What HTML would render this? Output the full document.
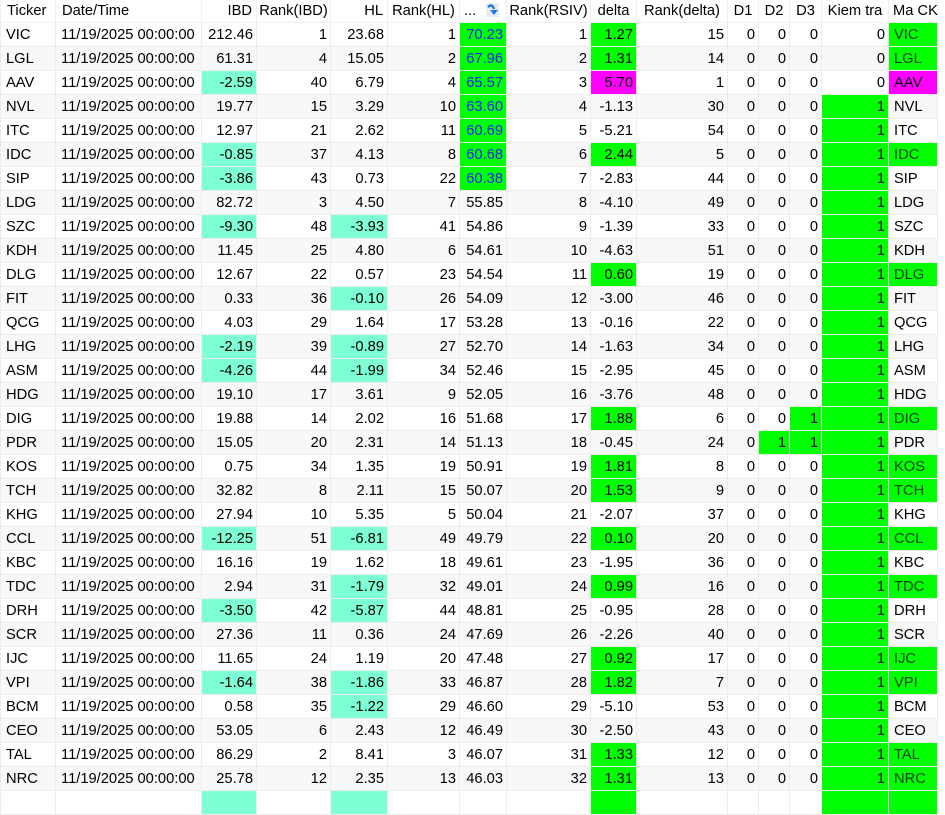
<!DOCTYPE html>
<html><head><meta charset="utf-8"><style>
html,body{margin:0;padding:0;background:#fff;width:945px;height:796px;overflow:hidden}
table{border-collapse:collapse;table-layout:fixed;width:937px;font-family:"Segoe UI","Liberation Sans",sans-serif;font-size:14.7px;color:#000;position:absolute;left:0;top:0}
td,th{border:1px solid #ececec;height:23px;padding:0 3px 0 5px;white-space:nowrap;overflow:hidden;text-align:right;font-weight:normal}
th{height:22px;border-top:none;border-color:#efefef;padding:0 2px}
tr:nth-child(odd) td{background:#f8f8f8}
td:nth-child(1),td:nth-child(2),td:nth-child(15),th:nth-child(1),th:nth-child(2),th:nth-child(15){text-align:left}
th:nth-child(1),th:nth-child(2){padding-left:6px}
th:nth-child(15){padding-left:4px;overflow:visible}
th{text-align:right}
th:nth-child(4),th:nth-child(6),th:nth-child(7),th:nth-child(8),th:nth-child(9),th:nth-child(10),th:nth-child(11),th:nth-child(12),th:nth-child(13),th:nth-child(14){text-align:center}
tr td.a{background:#7fffd4}
tr td.g{background:#00ff00}
tr td.m{background:#ff00ff}
tr td.b{background:#00ff00;color:#1a1aff}
td.k{color:#0b3d0b}
</style></head><body>
<table>
<colgroup><col style="width:55px"><col style="width:146px"><col style="width:55px"><col style="width:74px"><col style="width:57px"><col style="width:72px"><col style="width:47px"><col style="width:84px"><col style="width:46px"><col style="width:91px"><col style="width:31px"><col style="width:31px"><col style="width:32px"><col style="width:67px"><col style="width:49px"></colgroup>
<tr><th>Ticker</th><th>Date/Time</th><th style="padding-right:4px">IBD</th><th>Rank(IBD)</th><th style="padding-right:4px">HL</th><th>Rank(HL)</th><th style="text-align:left;padding-left:4px;position:relative">...<svg style="position:absolute;left:26px;top:3px" width="13" height="14" viewBox="0 0 13 14"><rect x="0" y="0" width="13" height="14" fill="#e9eef3"/><path d="M2 4 Q6 0 8 6" stroke="#1e78e6" stroke-width="2.4" fill="none"/><path d="M4 7 L12 7 L8 12 Z" fill="#1e78e6"/></svg></th><th>Rank(RSIV)</th><th>delta</th><th>Rank(delta)</th><th>D1</th><th>D2</th><th>D3</th><th>Kiem tra</th><th>Ma CK</th></tr>
<tr><td>VIC</td><td>11/19/2025 00:00:00</td><td>212.46</td><td>1</td><td>23.68</td><td>1</td><td class="b">70.23</td><td>1</td><td class="g">1.27</td><td>15</td><td>0</td><td>0</td><td>0</td><td>0</td><td class="g k">VIC</td></tr>
<tr><td>LGL</td><td>11/19/2025 00:00:00</td><td>61.31</td><td>4</td><td>15.05</td><td>2</td><td class="b">67.96</td><td>2</td><td class="g">1.31</td><td>14</td><td>0</td><td>0</td><td>0</td><td>0</td><td class="g k">LGL</td></tr>
<tr><td>AAV</td><td>11/19/2025 00:00:00</td><td class="a">-2.59</td><td>40</td><td>6.79</td><td>4</td><td class="b">65.57</td><td>3</td><td class="m">5.70</td><td>1</td><td>0</td><td>0</td><td>0</td><td>0</td><td class="m">AAV</td></tr>
<tr><td>NVL</td><td>11/19/2025 00:00:00</td><td>19.77</td><td>15</td><td>3.29</td><td>10</td><td class="b">63.60</td><td>4</td><td>-1.13</td><td>30</td><td>0</td><td>0</td><td>0</td><td class="g">1</td><td>NVL</td></tr>
<tr><td>ITC</td><td>11/19/2025 00:00:00</td><td>12.97</td><td>21</td><td>2.62</td><td>11</td><td class="b">60.69</td><td>5</td><td>-5.21</td><td>54</td><td>0</td><td>0</td><td>0</td><td class="g">1</td><td>ITC</td></tr>
<tr><td>IDC</td><td>11/19/2025 00:00:00</td><td class="a">-0.85</td><td>37</td><td>4.13</td><td>8</td><td class="b">60.68</td><td>6</td><td class="g">2.44</td><td>5</td><td>0</td><td>0</td><td>0</td><td class="g">1</td><td class="g k">IDC</td></tr>
<tr><td>SIP</td><td>11/19/2025 00:00:00</td><td class="a">-3.86</td><td>43</td><td>0.73</td><td>22</td><td class="b">60.38</td><td>7</td><td>-2.83</td><td>44</td><td>0</td><td>0</td><td>0</td><td class="g">1</td><td>SIP</td></tr>
<tr><td>LDG</td><td>11/19/2025 00:00:00</td><td>82.72</td><td>3</td><td>4.50</td><td>7</td><td>55.85</td><td>8</td><td>-4.10</td><td>49</td><td>0</td><td>0</td><td>0</td><td class="g">1</td><td>LDG</td></tr>
<tr><td>SZC</td><td>11/19/2025 00:00:00</td><td class="a">-9.30</td><td>48</td><td class="a">-3.93</td><td>41</td><td>54.86</td><td>9</td><td>-1.39</td><td>33</td><td>0</td><td>0</td><td>0</td><td class="g">1</td><td>SZC</td></tr>
<tr><td>KDH</td><td>11/19/2025 00:00:00</td><td>11.45</td><td>25</td><td>4.80</td><td>6</td><td>54.61</td><td>10</td><td>-4.63</td><td>51</td><td>0</td><td>0</td><td>0</td><td class="g">1</td><td>KDH</td></tr>
<tr><td>DLG</td><td>11/19/2025 00:00:00</td><td>12.67</td><td>22</td><td>0.57</td><td>23</td><td>54.54</td><td>11</td><td class="g">0.60</td><td>19</td><td>0</td><td>0</td><td>0</td><td class="g">1</td><td class="g k">DLG</td></tr>
<tr><td>FIT</td><td>11/19/2025 00:00:00</td><td>0.33</td><td>36</td><td class="a">-0.10</td><td>26</td><td>54.09</td><td>12</td><td>-3.00</td><td>46</td><td>0</td><td>0</td><td>0</td><td class="g">1</td><td>FIT</td></tr>
<tr><td>QCG</td><td>11/19/2025 00:00:00</td><td>4.03</td><td>29</td><td>1.64</td><td>17</td><td>53.28</td><td>13</td><td>-0.16</td><td>22</td><td>0</td><td>0</td><td>0</td><td class="g">1</td><td>QCG</td></tr>
<tr><td>LHG</td><td>11/19/2025 00:00:00</td><td class="a">-2.19</td><td>39</td><td class="a">-0.89</td><td>27</td><td>52.70</td><td>14</td><td>-1.63</td><td>34</td><td>0</td><td>0</td><td>0</td><td class="g">1</td><td>LHG</td></tr>
<tr><td>ASM</td><td>11/19/2025 00:00:00</td><td class="a">-4.26</td><td>44</td><td class="a">-1.99</td><td>34</td><td>52.46</td><td>15</td><td>-2.95</td><td>45</td><td>0</td><td>0</td><td>0</td><td class="g">1</td><td>ASM</td></tr>
<tr><td>HDG</td><td>11/19/2025 00:00:00</td><td>19.10</td><td>17</td><td>3.61</td><td>9</td><td>52.05</td><td>16</td><td>-3.76</td><td>48</td><td>0</td><td>0</td><td>0</td><td class="g">1</td><td>HDG</td></tr>
<tr><td>DIG</td><td>11/19/2025 00:00:00</td><td>19.88</td><td>14</td><td>2.02</td><td>16</td><td>51.68</td><td>17</td><td class="g">1.88</td><td>6</td><td>0</td><td>0</td><td class="g">1</td><td class="g">1</td><td class="g k">DIG</td></tr>
<tr><td>PDR</td><td>11/19/2025 00:00:00</td><td>15.05</td><td>20</td><td>2.31</td><td>14</td><td>51.13</td><td>18</td><td>-0.45</td><td>24</td><td>0</td><td class="g">1</td><td class="g">1</td><td class="g">1</td><td>PDR</td></tr>
<tr><td>KOS</td><td>11/19/2025 00:00:00</td><td>0.75</td><td>34</td><td>1.35</td><td>19</td><td>50.91</td><td>19</td><td class="g">1.81</td><td>8</td><td>0</td><td>0</td><td>0</td><td class="g">1</td><td class="g k">KOS</td></tr>
<tr><td>TCH</td><td>11/19/2025 00:00:00</td><td>32.82</td><td>8</td><td>2.11</td><td>15</td><td>50.07</td><td>20</td><td class="g">1.53</td><td>9</td><td>0</td><td>0</td><td>0</td><td class="g">1</td><td class="g k">TCH</td></tr>
<tr><td>KHG</td><td>11/19/2025 00:00:00</td><td>27.94</td><td>10</td><td>5.35</td><td>5</td><td>50.04</td><td>21</td><td>-2.07</td><td>37</td><td>0</td><td>0</td><td>0</td><td class="g">1</td><td>KHG</td></tr>
<tr><td>CCL</td><td>11/19/2025 00:00:00</td><td class="a">-12.25</td><td>51</td><td class="a">-6.81</td><td>49</td><td>49.79</td><td>22</td><td class="g">0.10</td><td>20</td><td>0</td><td>0</td><td>0</td><td class="g">1</td><td class="g k">CCL</td></tr>
<tr><td>KBC</td><td>11/19/2025 00:00:00</td><td>16.16</td><td>19</td><td>1.62</td><td>18</td><td>49.61</td><td>23</td><td>-1.95</td><td>36</td><td>0</td><td>0</td><td>0</td><td class="g">1</td><td>KBC</td></tr>
<tr><td>TDC</td><td>11/19/2025 00:00:00</td><td>2.94</td><td>31</td><td class="a">-1.79</td><td>32</td><td>49.01</td><td>24</td><td class="g">0.99</td><td>16</td><td>0</td><td>0</td><td>0</td><td class="g">1</td><td class="g k">TDC</td></tr>
<tr><td>DRH</td><td>11/19/2025 00:00:00</td><td class="a">-3.50</td><td>42</td><td class="a">-5.87</td><td>44</td><td>48.81</td><td>25</td><td>-0.95</td><td>28</td><td>0</td><td>0</td><td>0</td><td class="g">1</td><td>DRH</td></tr>
<tr><td>SCR</td><td>11/19/2025 00:00:00</td><td>27.36</td><td>11</td><td>0.36</td><td>24</td><td>47.69</td><td>26</td><td>-2.26</td><td>40</td><td>0</td><td>0</td><td>0</td><td class="g">1</td><td>SCR</td></tr>
<tr><td>IJC</td><td>11/19/2025 00:00:00</td><td>11.65</td><td>24</td><td>1.19</td><td>20</td><td>47.48</td><td>27</td><td class="g">0.92</td><td>17</td><td>0</td><td>0</td><td>0</td><td class="g">1</td><td class="g k">IJC</td></tr>
<tr><td>VPI</td><td>11/19/2025 00:00:00</td><td class="a">-1.64</td><td>38</td><td class="a">-1.86</td><td>33</td><td>46.87</td><td>28</td><td class="g">1.82</td><td>7</td><td>0</td><td>0</td><td>0</td><td class="g">1</td><td class="g k">VPI</td></tr>
<tr><td>BCM</td><td>11/19/2025 00:00:00</td><td>0.58</td><td>35</td><td class="a">-1.22</td><td>29</td><td>46.60</td><td>29</td><td>-5.10</td><td>53</td><td>0</td><td>0</td><td>0</td><td class="g">1</td><td>BCM</td></tr>
<tr><td>CEO</td><td>11/19/2025 00:00:00</td><td>53.05</td><td>6</td><td>2.43</td><td>12</td><td>46.49</td><td>30</td><td>-2.50</td><td>43</td><td>0</td><td>0</td><td>0</td><td class="g">1</td><td>CEO</td></tr>
<tr><td>TAL</td><td>11/19/2025 00:00:00</td><td>86.29</td><td>2</td><td>8.41</td><td>3</td><td>46.07</td><td>31</td><td class="g">1.33</td><td>12</td><td>0</td><td>0</td><td>0</td><td class="g">1</td><td class="g k">TAL</td></tr>
<tr><td>NRC</td><td>11/19/2025 00:00:00</td><td>25.78</td><td>12</td><td>2.35</td><td>13</td><td>46.03</td><td>32</td><td class="g">1.31</td><td>13</td><td>0</td><td>0</td><td>0</td><td class="g">1</td><td class="g k">NRC</td></tr>
<tr><td></td><td></td><td class="a"></td><td></td><td class="a"></td><td></td><td></td><td></td><td class="g"></td><td></td><td></td><td></td><td></td><td class="g"></td><td class="g"></td></tr>
</table>
</body></html>
